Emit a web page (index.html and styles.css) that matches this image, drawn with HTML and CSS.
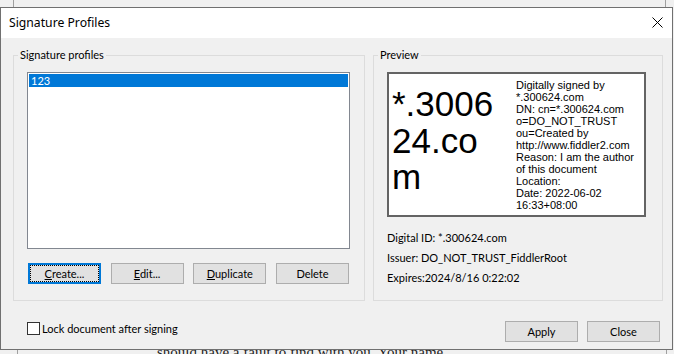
FILE: index.html
```html
<!DOCTYPE html>
<html lang="en">
<head>
  <meta charset="UTF-8">
  <title>Signature Profiles</title>
  <link rel="stylesheet" href="styles.css">
</head>
<body>
  <!-- document edge behind the dialog -->
  <div class="backdrop-top"><div class="doc-edge"></div></div>

  <div class="dialog">
    <div class="titlebar">
      <span class="title">Signature Profiles</span>
      <svg class="close-icon" width="11" height="11" viewBox="0 0 11 11">
        <path d="M0.5 0.5 L10.5 10.5 M10.5 0.5 L0.5 10.5" stroke="#000" stroke-width="1" fill="none"/>
      </svg>
    </div>

    <div class="dialog-body">
      <div class="groups">
        <!-- Profiles list -->
        <fieldset class="group group-profiles">
          <legend>Signature profiles</legend>
          <div class="group-inner">
            <div class="listbox">
              <div class="list-item selected">123</div>
            </div>
            <div class="button-row">
              <button class="btn focused"><u>C</u>reate...</button>
              <button class="btn"><u>E</u>dit...</button>
              <button class="btn"><u>D</u>uplicate</button>
              <button class="btn">Delete</button>
            </div>
          </div>
        </fieldset>

        <!-- Preview -->
        <fieldset class="group group-preview">
          <legend>Preview</legend>
          <div class="group-inner">
            <div class="preview">
              <div class="preview-name">*.3006<br>24.co<br>m</div>
              <div class="preview-details">
                Digitally signed by<br>
                *.300624.com<br>
                DN: cn=*.300624.com<br>
                o=DO_NOT_TRUST<br>
                ou=Created by<br>
                http://www.fiddler2.com<br>
                Reason: I am the author<br>
                of this document<br>
                Location:<br>
                Date: 2022-06-02<br>
                16:33+08:00
              </div>
            </div>
            <div class="info">
              <div>Digital ID: *.300624.com</div>
              <div>Issuer: DO_NOT_TRUST_FiddlerRoot</div>
              <div>Expires:2024/8/16 0:22:02</div>
            </div>
          </div>
        </fieldset>
      </div>

      <div class="footer">
        <label class="check">
          <span class="checkbox"></span>
          Lock document after signing
        </label>
        <div class="actions">
          <button class="btn">Apply</button>
          <button class="btn">Close</button>
        </div>
      </div>
    </div>
  </div>

  <div class="backdrop-bottom">
    <div class="doc-edge">
      <p>should have a fault to find with you. Your name</p>
    </div>
  </div>
</body>
</html>
```

FILE: styles.css
```css
/* Page behind the dialog */
body {
  margin: 0;
  background: #f0f0f0;
  font-family: Lato, "Liberation Sans", sans-serif;
  font-size: 11px;
  color: #000;
  width: 674px;
  height: 354px;
  overflow: hidden;
}

.backdrop-top {
  height: 7px;
}

.backdrop-top .doc-edge {
  margin-left: 13px;
  width: 653px;
  height: 7px;
  box-sizing: border-box;
  border-left: 1px solid #a0a0a0;
  border-right: 1px solid #a0a0a0;
}

.backdrop-bottom {
  height: 4px;
  overflow: hidden;
}

.backdrop-bottom .doc-edge {
  margin-left: 17px;
  width: 650px;
  height: 4px;
  box-sizing: border-box;
  border-left: 1px solid #a0a0a0;
  border-right: 1px solid #a0a0a0;
  overflow: hidden;
}

.backdrop-bottom p {
  margin: -7px 0 0 139px;
  font-family: "Liberation Serif", serif;
  font-size: 15px;
  line-height: 18px;
  color: #222;
  white-space: nowrap;
}

/* Dialog window */
.dialog {
  width: 673px;
  height: 343px;
  box-sizing: border-box;
  border: 1px solid #707070;
  background: #f0f0f0;
  display: flex;
  flex-direction: column;
}

.titlebar {
  height: 30px;
  background: #fff;
  display: flex;
  align-items: center;
  justify-content: space-between;
  padding: 0 9px 0 8px;
  flex-shrink: 0;
}

.title {
  font-family: "Noto Sans", sans-serif;
  font-size: 12.2px;
  margin-top: -1px;
}

.close-icon {
  margin-top: -2px;
}

.dialog-body {
  flex: 1;
  padding: 10px 9px 0 12px;
}

.groups {
  display: flex;
  gap: 8px;
}

/* Group boxes */
.group {
  margin: 0;
  padding: 10px 0 12px 0;
  border: 1px solid #dcdcdc;
  min-width: 0;
}

.group legend {
  margin-left: 4px;
  padding: 0 2px;
  line-height: 14px;
}

.group-profiles {
  width: 352px;
  box-sizing: border-box;
}

.group-preview {
  width: 290px;
  box-sizing: border-box;
}

.group-inner {
  padding: 0 14px 0 13px;
}

/* List box */
.listbox {
  height: 177px;
  box-sizing: border-box;
  border: 1px solid #828790;
  background: #fff;
  padding: 1px;
}

.list-item {
  height: 13px;
  line-height: 13px;
  padding-left: 2px;
}

.list-item.selected {
  background: #0078d7;
  color: #fff;
}

.button-row {
  margin-top: 14px;
  padding: 0 1px;
  display: flex;
  justify-content: space-between;
}

/* Buttons */
.btn {
  width: 73px;
  height: 21px;
  padding: 0;
  background: #e1e1e1;
  border: 1px solid #adadad;
  font-family: inherit;
  font-size: 11px;
  color: #000;
  line-height: 18px;
}

.btn.focused {
  border-color: #0078d7;
  box-shadow: inset 0 0 0 1px #0078d7;
  outline: 1px dotted #000;
  outline-offset: -3px;
}

/* Signature preview */
.preview {
  height: 145px;
  width: 259px;
  box-sizing: border-box;
  border: 2px solid #646464;
  background: #fff;
  display: flex;
}

.preview-name {
  width: 124px;
  flex-shrink: 0;
  padding: 12px 0 0 3px;
  font-family: "Liberation Sans", Arial, sans-serif;
  font-size: 35px;
  line-height: 36.5px;
  overflow: hidden;
}

.preview-details {
  align-self: center;
  font-family: "Liberation Sans", Arial, sans-serif;
  font-size: 11px;
  line-height: 12px;
  white-space: nowrap;
}

.info {
  margin-top: 11px;
  line-height: 20px;
}

/* Bottom row */
.footer {
  margin-top: 20px;
  display: flex;
  justify-content: space-between;
  align-items: flex-start;
}

.check {
  display: flex;
  align-items: center;
  gap: 2px;
  margin: 1px 0 0 14px;
  line-height: 13px;
}

.checkbox {
  width: 13px;
  height: 13px;
  box-sizing: border-box;
  border: 1px solid #333;
  background: #fff;
}

.actions {
  display: flex;
  gap: 9px;
  margin-right: 3px;
}
```
